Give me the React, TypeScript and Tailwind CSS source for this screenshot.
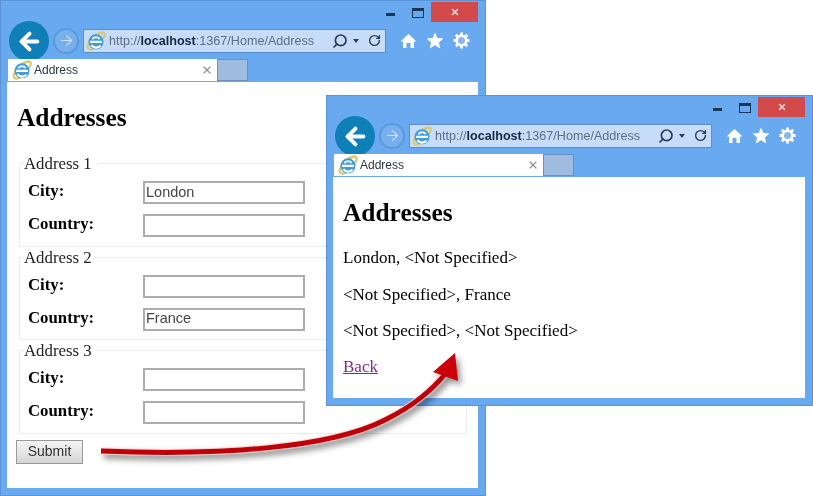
import { ArrowLeft, ArrowRight, RotateCw, Search, X } from "lucide-react";

const serif = "font-['Liberation_Serif',serif]";
const sans = "font-['Liberation_Sans',sans-serif]";

function IeLogo({ size }: { size: number }) {
  return (
    <svg width={size} height={size} viewBox="0 0 24 24" className="shrink-0">
      <path d="M3 21.500C0 18 6 9 11 5.500c4.500-3 9.500-4.500 11-2.500 1.200 1.700-.5 5-2 7" fill="none" stroke="#dcca72" strokeWidth="3" />
      <path d="M2.500 21c1.500 2 6 1 9-.5" fill="none" stroke="#dcca72" strokeWidth="2.600" />
      <circle cx="12" cy="13" r="9" fill="#3f9ddc" />
      <path d="M5 13h14M6.500 17c2.500 3.500 8 4 11 .8" fill="none" stroke="#fff" strokeWidth="2.600" />
      <path d="M8 10c1-3 7-3.500 8 0" fill="none" stroke="#dff0fb" strokeWidth="2.400" />
    </svg>
  );
}

function HomeIcon() {
  return (
    <svg width="17" height="16" viewBox="0 0 17 16">
      <path d="M8.500 1 L16.500 8.500 L14 8.500 L14 15 L10.500 15 L10.500 10 L6.500 10 L6.500 15 L3 15 L3 8.500 L.5 8.500 Z" fill="#fff" />
    </svg>
  );
}

function StarIcon() {
  return (
    <svg width="18" height="17" viewBox="0 0 18 17">
      <path d="M9 .5 L11.400 6 L17.500 6.500 L12.900 10.500 L14.300 16.500 L9 13.300 L3.700 16.500 L5.100 10.500 L.5 6.500 L6.600 6 Z" fill="#fff" />
    </svg>
  );
}

function GearIcon() {
  return (
    <svg width="17" height="17" viewBox="0 0 17 17">
      <circle cx="8.500" cy="8.500" r="4.800" fill="#8db6e6" stroke="#fff" strokeWidth="2.600" />
      <path d="M8.500 .5v3M8.500 13.500v3M.5 8.500h3M13.500 8.500h3M2.800 2.800l2.200 2.200M12 12l2.200 2.200M14.200 2.800 12 5M5 12l-2.200 2.200" stroke="#fff" strokeWidth="2.800" />
    </svg>
  );
}

function BrowserWindow({ className, children }: { className: string; children: React.ReactNode }) {
  return (
    <div className={`absolute flex flex-col bg-[#69a9f0] border border-[#5c93d6] ${className}`}>
      {/* title bar */}
      <div className="flex h-[21px] shrink-0 justify-end pr-[7px]">
        <div className="mt-[12px] mr-[17px] h-[3px] w-[9px] bg-[#1d3656]" />
        <div className="mt-[7px] mr-[7px] h-[10px] w-[12px] border border-t-[3px] border-[#1d3656]" />
        <div className="mt-[1px] flex h-[20px] w-[47px] items-center justify-center bg-[#d24a4a]">
          <X size={10} strokeWidth={3.500} className="text-[#f6dcdc]" />
        </div>
      </div>

      {/* nav row */}
      <div className="flex h-[37px] shrink-0 items-center pl-[8px]">
        <div className="z-0 mt-[1px] flex h-[40px] w-[40px] items-center justify-center rounded-full bg-[#0f7fb8]">
          <ArrowLeft size={27} strokeWidth={3.500} className="text-white" />
        </div>
        <div className="ml-[4px] flex h-[26px] w-[26px] items-center justify-center rounded-full border-2 border-[#5a9ad8] bg-[#78b0ef]">
          <ArrowRight size={17} strokeWidth={1.500} className="text-[#cfe2f8]" />
        </div>
        <div className="ml-[4px] flex h-[24px] w-[303px] items-center border border-[#5c8fc8] bg-[#c6dcf8] pl-[2px]">
          <IeLogo size={20} />
          <span className={`ml-[3px] pt-[2px] text-[12.600px] text-[#5f6f80] ${sans}`}>
            http://<b className="text-[#17293f]">localhost</b>:1367/Home/Address
          </span>
          <div className="ml-auto flex items-center pr-[4px] text-[#2c3f55]">
            <Search size={16} strokeWidth={2.600} className="-scale-x-100" />
            <div className="ml-[5px] h-0 w-0 border-x-[3px] border-t-[4px] border-x-transparent border-t-[#2c3f55]" />
            <RotateCw size={13} strokeWidth={2.600} className="ml-[9px]" />
          </div>
        </div>
        <div className="ml-[14px] flex w-[70px] items-center justify-between">
          <HomeIcon />
          <StarIcon />
          <GearIcon />
        </div>
      </div>

      {/* tab row */}
      <div className="z-10 flex h-[22px] shrink-0 pl-[7px]">
        <div className="flex w-[209px] items-center bg-white pl-[4px] pr-[4px]">
          <IeLogo size={20} />
          <span className={`ml-[2px] text-[12px] text-[#2b3542] ${sans}`}>Address</span>
          <X size={12} strokeWidth={2.500} className="ml-auto text-[#8a939c]" />
        </div>
        <div className="w-[31px] border border-[#6d8fbd] bg-[#a0bbe0]" />
      </div>

      {/* page */}
      <div className={`mt-[1px] ml-[6px] mr-[7px] mb-[7px] min-h-0 flex-1 overflow-hidden bg-white text-black ${serif}`}>
        {children}
      </div>
    </div>
  );
}

function Field({ label, value }: { label: string; value?: string }) {
  return (
    <div className="flex h-[33px] items-start">
      <label className="w-[115px] pt-[1px] text-[16.800px] leading-[18px] font-bold">{label}</label>
      <div className={`flex h-[23px] w-[162px] items-center border-2 border-[#adadad] pl-[1px] text-[14.500px] text-[#444] ${sans}`}>
        {value}
      </div>
    </div>
  );
}

function AddressSet({ title, city, country }: { title: string; city?: string; country?: string }) {
  return (
    <fieldset className="mb-[2px] h-[91.500px] border border-[#ededed] pl-[4px]">
      <legend className="pr-[6px] text-[16.800px] leading-[17px] text-[#222]">{title}</legend>
      <div className="pl-[4px] pt-[9px]">
        <Field label="City:" value={city} />
        <Field label="Country:" value={country} />
      </div>
    </fieldset>
  );
}

export default function App() {
  return (
    <div className="relative h-[496px] w-[813px] overflow-hidden bg-white blur-[0.5px]">
      <BrowserWindow className="left-0 top-0 h-[496px] w-[486px]">
        <div className="pl-[10px] pt-[21px]">
          <h1 className="text-[25.400px] leading-[28px] font-bold">Addresses</h1>
          <div className="ml-[2px] mt-[24px] w-[448px]">
            <AddressSet title="Address 1" city="London" />
            <AddressSet title="Address 2" country="France" />
            <AddressSet title="Address 3" />
          </div>
          <button className={`-ml-[1px] mt-[4px] h-[24px] w-[67px] border border-[#9a9a9a] bg-gradient-to-b from-[#f4f4f4] to-[#d6d6d6] text-[14px] text-[#333] ${sans}`}>
            Submit
          </button>
        </div>
      </BrowserWindow>

      <BrowserWindow className="left-[326px] top-[95px] h-[311px] w-[487px]">
        <div className="pl-[10px] pt-[21px] text-[17px] leading-[18px]">
          <h1 className="mb-[23px] text-[25.400px] leading-[28px] font-bold">Addresses</h1>
          <p className="mb-[18.500px]">London, &lt;Not Specified&gt;</p>
          <p className="mb-[18.500px]">&lt;Not Specified&gt;, France</p>
          <p className="mb-[18px]">&lt;Not Specified&gt;, &lt;Not Specified&gt;</p>
          <a className="text-[#7b2a8c] underline">Back</a>
        </div>
      </BrowserWindow>

      {/* red arrow between the two windows */}
      <svg className="absolute left-0 top-0 drop-shadow-[3px_4px_3px_rgba(0,0,0,0.45)]" width="813" height="496" viewBox="0 0 813 496">
        <path d="M101 451 C 220 456 330 448 385 420 C 415 405 432 390 447 372" fill="none" stroke="#f3d9d6" strokeWidth="7" />
        <path d="M101 451 C 220 456 330 448 385 420 C 415 405 432 390 447 372" fill="none" stroke="#c00008" strokeWidth="5" />
        <path d="M455 353 L433 372 L458 381 Z" fill="#cc0008" />
      </svg>
    </div>
  );
}
